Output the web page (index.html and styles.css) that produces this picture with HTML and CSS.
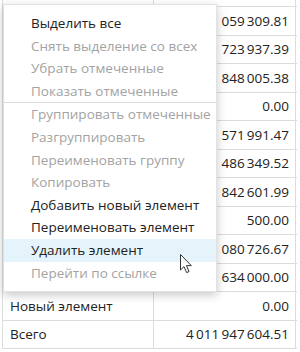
FILE: index.html
```html
<!DOCTYPE html>
<html lang="ru">
<head>
    <meta charset="UTF-8">
    <title>Таблица</title>
    <link rel="stylesheet" href="styles.css">
</head>
<body>
    <div class="sheet">
        <div class="grid">
            <div class="cell head"></div><div class="cell head"></div>
            <div class="cell"></div><div class="cell num">1&#8201;059&#8201;309.81</div>
            <div class="cell"></div><div class="cell num">723&#8201;937.39</div>
            <div class="cell"></div><div class="cell num">848&#8201;005.38</div>
            <div class="cell"></div><div class="cell num">0.00</div>
            <div class="cell"></div><div class="cell num">571&#8201;991.47</div>
            <div class="cell"></div><div class="cell num">486&#8201;349.52</div>
            <div class="cell"></div><div class="cell num">842&#8201;601.99</div>
            <div class="cell"></div><div class="cell num">500.00</div>
            <div class="cell"></div><div class="cell num">1&#8201;080&#8201;726.67</div>
            <div class="cell"></div><div class="cell num">634&#8201;000.00</div>
            <div class="cell">Новый элемент</div><div class="cell num">0.00</div>
            <div class="cell">Всего</div><div class="cell num">4&#8201;011&#8201;947&#8201;604.51</div>
        </div>

        <ul class="menu">
            <li class="item">Выделить все</li>
            <li class="item off">Снять выделение со всех</li>
            <li class="item off">Убрать отмеченные</li>
            <li class="item off">Показать отмеченные</li>
            <li class="sep"></li>
            <li class="item off">Группировать отмеченные</li>
            <li class="item off">Разгруппировать</li>
            <li class="item off">Переименовать группу</li>
            <li class="item off">Копировать</li>
            <li class="item">Добавить новый элемент</li>
            <li class="item">Переименовать элемент</li>
            <li class="item hover">Удалить элемент</li>
            <li class="item off">Перейти по ссылке</li>
        </ul>

        <svg class="cursor" width="14" height="22" viewBox="0 0 14 22">
            <path d="M1.5 1.5 L1.5 17 L5 13.6 L7.6 19.6 L10 18.6 L7.5 12.6 L12.3 12.6 Z" fill="#fff" stroke="#333" stroke-width="1" stroke-linejoin="round"/>
        </svg>
    </div>
</body>
</html>
```

FILE: styles.css
```css
html, body {
    margin: 0;
    background: #fff;
}

body {
    font-family: 'Open Sans', 'Noto Sans', Arial, sans-serif;
    font-size: 13.5px;
    color: #222;
    overflow: hidden;
    height: 352px;
}

.sheet {
    position: relative;
    display: flow-root;
    padding: 0 4px 0 2px;
}

.grid {
    display: grid;
    grid-template-columns: 151px 143px;
    grid-auto-rows: 28.5px;
    margin-top: -21.5px;
    border-left: 1px solid #dcdcdc;
    border-right: 1px solid #dcdcdc;
}

.cell {
    border-bottom: 1px solid #dcdcdc;
    display: flex;
    align-items: center;
    padding: 0 7px;
    white-space: nowrap;
    overflow: hidden;
}
.cell:nth-child(odd) {
    border-right: 1px solid #dcdcdc;
}
.cell.num {
    justify-content: flex-end;
    padding-right: 8px;
}

.menu {
    position: absolute;
    top: 4px;
    left: 3px;
    width: 214px;
    margin: 0;
    padding: 7px 0;
    list-style: none;
    background: #fff;
    border: 1px solid #e2e2e2;
    box-sizing: border-box;
    box-shadow: 0 3px 9px rgba(0, 0, 0, 0.22);
}

.item {
    height: 22.6px;
    line-height: 22.6px;
    padding-left: 27px;
    color: #222;
    white-space: nowrap;
}
.item.off {
    color: #a3a3a3;
}
.item.hover {
    background: #e5f4fa;
}

.sep {
    height: 1px;
    background: #dedede;
}

.cursor {
    position: absolute;
    left: 179px;
    top: 253px;
}
```
